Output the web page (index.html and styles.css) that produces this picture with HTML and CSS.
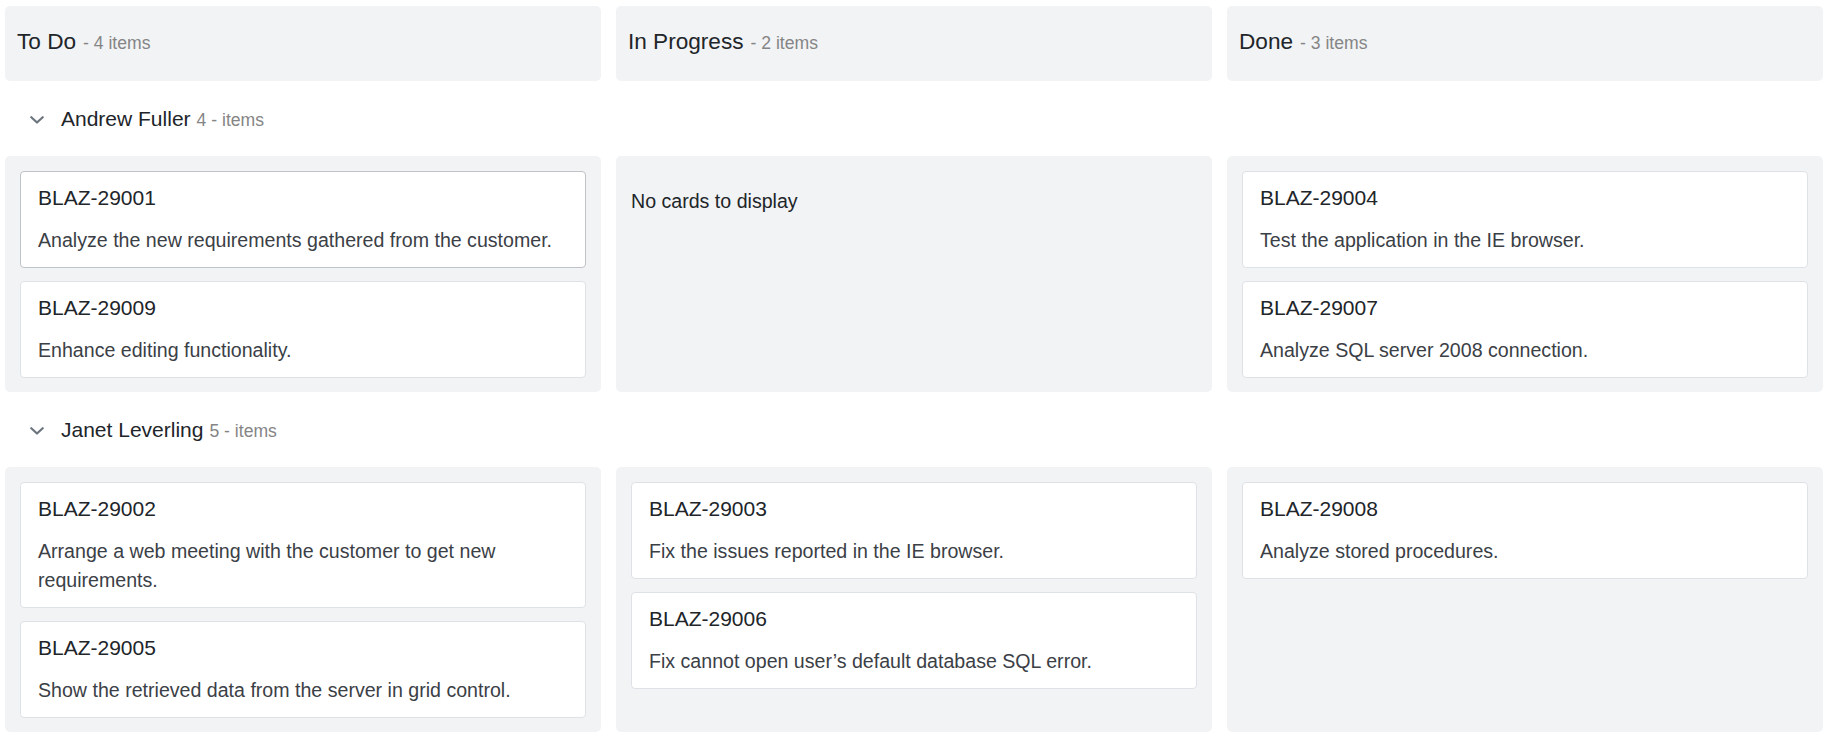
FILE: index.html
```html
<!DOCTYPE html>
<html lang="en">
<head>
<meta charset="utf-8">
<title>Kanban</title>
<link rel="stylesheet" href="styles.css">
</head>
<body>
<div class="board">
  <div class="row header-row">
    <div class="col-header"><span class="col-title">To Do</span><span class="col-count">- 4 items</span></div>
    <div class="col-header"><span class="col-title">In Progress</span><span class="col-count">- 2 items</span></div>
    <div class="col-header"><span class="col-title">Done</span><span class="col-count">- 3 items</span></div>
  </div>

  <div class="swimlane">
    <svg class="chevron" width="14" height="8" viewBox="0 0 14 8"><path d="M1.3 1.2 L7 6.5 L12.7 1.2" fill="none" stroke="#6c757d" stroke-width="2.2" stroke-linecap="round" stroke-linejoin="round"/></svg>
    <span class="lane-label"><span class="lane-name">Andrew Fuller</span><span class="lane-count">4 - items</span></span>
  </div>
  <div class="row lane-row">
    <div class="cell">
      <div class="card selected">
        <div class="card-title">BLAZ-29001</div>
        <div class="card-text">Analyze the new requirements gathered from the customer.</div>
      </div>
      <div class="card">
        <div class="card-title">BLAZ-29009</div>
        <div class="card-text">Enhance editing functionality.</div>
      </div>
    </div>
    <div class="cell">
      <div class="empty">No cards to display</div>
    </div>
    <div class="cell">
      <div class="card">
        <div class="card-title">BLAZ-29004</div>
        <div class="card-text">Test the application in the IE browser.</div>
      </div>
      <div class="card">
        <div class="card-title">BLAZ-29007</div>
        <div class="card-text">Analyze SQL server 2008 connection.</div>
      </div>
    </div>
  </div>

  <div class="swimlane">
    <svg class="chevron" width="14" height="8" viewBox="0 0 14 8"><path d="M1.3 1.2 L7 6.5 L12.7 1.2" fill="none" stroke="#6c757d" stroke-width="2.2" stroke-linecap="round" stroke-linejoin="round"/></svg>
    <span class="lane-label"><span class="lane-name">Janet Leverling</span><span class="lane-count">5 - items</span></span>
  </div>
  <div class="row lane-row">
    <div class="cell">
      <div class="card">
        <div class="card-title">BLAZ-29002</div>
        <div class="card-text">Arrange a web meeting with the customer to get new requirements.</div>
      </div>
      <div class="card">
        <div class="card-title">BLAZ-29005</div>
        <div class="card-text">Show the retrieved data from the server in grid control.</div>
      </div>
    </div>
    <div class="cell">
      <div class="card">
        <div class="card-title">BLAZ-29003</div>
        <div class="card-text">Fix the issues reported in the IE browser.</div>
      </div>
      <div class="card">
        <div class="card-title">BLAZ-29006</div>
        <div class="card-text">Fix cannot open user’s default database SQL error.</div>
      </div>
    </div>
    <div class="cell">
      <div class="card">
        <div class="card-title">BLAZ-29008</div>
        <div class="card-text">Analyze stored procedures.</div>
      </div>
    </div>
  </div>
</div>
</body>
</html>
```

FILE: styles.css
```css
html, body {
  margin: 0;
  padding: 0;
  background: #ffffff;
}

body {
  font-family: "Liberation Sans", Arial, sans-serif;
  color: #212529;
}

.board {
  padding: 6px 5px 0 5px;
}

.row {
  display: grid;
  grid-template-columns: repeat(3, 1fr);
  column-gap: 15px;
}

.col-header {
  height: 75px;
  box-sizing: border-box;
  background: #f2f3f5;
  border-radius: 5px;
  padding: 23px 12px 0 12px;
  line-height: normal;
  white-space: nowrap;
}

.col-title {
  font-size: 22.6px;
  color: #212529;
}

.col-count {
  font-size: 17.6px;
  color: #858585;
  margin-left: 7px;
}

.swimlane {
  height: 75px;
  display: flex;
  align-items: center;
  padding-left: 25px;
}

.chevron {
  display: block;
  flex: none;
  margin-right: 17px;
  margin-top: 3px;
}

.lane-label {
  white-space: nowrap;
}

.lane-name {
  font-size: 21px;
  color: #212529;
}

.lane-count {
  font-size: 17.6px;
  color: #858585;
  margin-left: 6px;
}

.cell {
  background: #f2f3f5;
  border-radius: 5px;
  padding: 15px 15px 14px 15px;
  display: flex;
  flex-direction: column;
  gap: 13px;
}

.card {
  background: #ffffff;
  border: 1px solid #dee2e6;
  border-radius: 4px;
  padding: 10px 16px 12px 17px;
}

.card.selected {
  border-color: #bfc2c6;
}

.card-title {
  font-size: 21px;
  line-height: 31px;
  color: #212529;
  margin-bottom: 13px;
}

.card-text {
  font-size: 19.6px;
  line-height: 29px;
  color: #3b4046;
}

.empty {
  font-size: 19.6px;
  line-height: 29px;
  color: #212529;
  padding-top: 16px;
}
```
